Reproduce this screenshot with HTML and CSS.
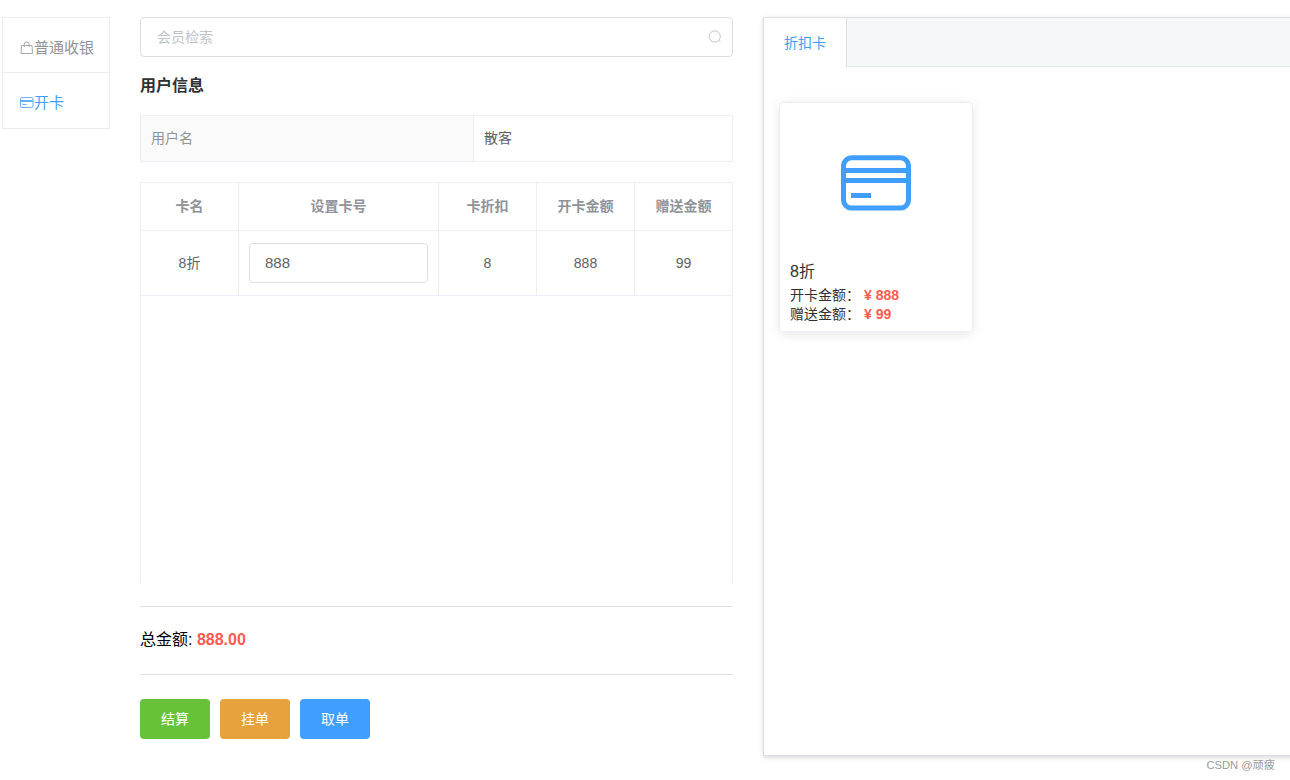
FILE: index.html
```html
<!DOCTYPE html>
<html lang="zh-CN">
<head>
<meta charset="UTF-8">
<title>收银</title>
<link rel="stylesheet" href="styles.css">
</head>
<body>
<div class="page">
  <nav class="side">
    <a class="side-item"><svg class="side-icon" viewBox="0 0 14 14" fill="none" stroke="currentColor"><path d="M1.5 4.5h10.5l.5 8H1z M4.2 6V3.4a2.5 2.5 0 0 1 5 0V6"/></svg><span>普通收银</span></a>
    <a class="side-item active"><svg class="side-icon" viewBox="0 0 14 14" fill="none" stroke="currentColor"><rect x=".5" y="1.5" width="12.5" height="10" rx="1.5"/><path d="M.5 4.5h12.5M.5 5.5h12.5M2.5 8.5h4"/></svg><span>开卡</span></a>
  </nav>

  <main class="main">
    <div class="search">
      <span>会员检索</span>
      <svg class="search-icon" viewBox="0 0 14 14" fill="none" stroke="currentColor"><circle cx="6.7" cy="6.5" r="5.6"/><path d="M10.6 10.4l2 2"/></svg>
    </div>
    <h2 class="title">用户信息</h2>
    <div class="info">
      <div class="info-label">用户名</div>
      <div class="info-value">散客</div>
    </div>
    <div class="table">
      <div class="row head">
        <div class="cell">卡名</div><div class="cell">设置卡号</div><div class="cell">卡折扣</div><div class="cell">开卡金额</div><div class="cell">赠送金额</div>
      </div>
      <div class="row body">
        <div class="cell">8折</div><div class="cell"><div class="input">888</div></div><div class="cell">8</div><div class="cell">888</div><div class="cell">99</div>
      </div>
    </div>
    <div class="total">总金额: <b class="price">888.00</b></div>
    <div class="actions">
      <button class="btn success">结算</button>
      <button class="btn warning">挂单</button>
      <button class="btn primary">取单</button>
    </div>
  </main>

  <section class="panel">
    <div class="tabs"><div class="tab">折扣卡</div></div>
    <div class="panel-body">
      <article class="card">
        <div class="card-pic">
          <svg class="card-icon" viewBox="0 0 70 56" fill="none" stroke="currentColor" stroke-width="5"><rect x="2.5" y="2.8" width="65" height="50.2" rx="8"/><path d="M2.5 15.5h65M2.5 25.5h65M10 40.5h20"/></svg>
        </div>
        <div class="card-name">8折</div>
        <div class="card-line">开卡金额：<b class="price">¥ 888</b></div>
        <div class="card-line">赠送金额：<b class="price">¥ 99</b></div>
      </article>
    </div>
  </section>
</div>
<div class="credit">CSDN @顽疲</div>
</body>
</html>
```
FILE: styles.css
```css
* { box-sizing: border-box; }
body {
  margin: 0;
  height: 780px;
  overflow: hidden;
  background: #fff;
  color: #303133;
  font: 14px/20px "Liberation Sans", "Noto Sans CJK SC", sans-serif;
}
.page {
  display: grid;
  grid-template-columns: 108px 593px 540px;
  column-gap: 30px;
  align-items: start;
  padding: 17px 0 0 2px;
}
.side { border: 1px solid #ebeef0; }
.side-item {
  display: flex;
  align-items: center;
  height: 54px;
  padding: 5px 0 0 17px;
  font-size: 15px;
  color: #909399;
}
.side-item + .side-item {
  height: 56px;
  padding-top: 4px;
  border-top: 1px solid #ebeef0;
}
.side-item.active { color: #409eff; }
.side-icon { width: 14px; height: 14px; opacity: .8; }

.search {
  display: flex;
  align-items: center;
  justify-content: space-between;
  height: 40px;
  padding: 0 10px 0 16px;
  border: 1px solid #dcdfe6;
  border-radius: 4px;
  color: #c0c4cc;
}
.search-icon { width: 14px; height: 14px; }
.title {
  margin: 17px 0;
  font-size: 16px;
  line-height: 24px;
  font-weight: 700;
}
.info {
  display: grid;
  grid-template-columns: 333px 1fr;
  height: 47px;
  border: 1px solid #ebeef5;
  line-height: 45px;
}
.info-label {
  padding-left: 10px;
  border-right: 1px solid #ebeef5;
  background: #fafafa;
  color: #909399;
}
.info-value { padding-left: 10px; color: #606266; }

.table {
  height: 401px;
  margin-top: 20px;
  border: 1px solid #ebeef5;
  border-bottom: 0;
}
.row {
  display: grid;
  grid-template-columns: 98px 200px 98px 98px 97px;
  border-bottom: 1px solid #ebeef5;
}
.head { height: 48px; color: #909399; font-weight: 700; }
.head .cell { padding-bottom: 2px; }
.body { height: 65px; color: #606266; }
.cell {
  display: flex;
  align-items: center;
  justify-content: center;
  border-right: 1px solid #ebeef5;
}
.cell:last-child { border-right: 0; }
.input {
  width: 179px;
  height: 40px;
  padding-left: 15px;
  border: 1px solid #dcdfe6;
  border-radius: 4px;
  font-size: 15px;
  line-height: 38px;
}
.total {
  height: 69px;
  margin-top: 23px;
  border: solid #dcdfe6;
  border-width: 1px 0;
  color: #000;
  font-size: 16px;
  line-height: 65px;
}
.price { color: #ff5a50; }
.actions { display: flex; gap: 10px; margin-top: 24px; }
.btn {
  width: 70px;
  height: 40px;
  padding: 0;
  border: 0;
  border-radius: 4px;
  color: #fff;
  font: inherit;
}
.success { background: #67c23a; }
.warning { background: #e6a23c; }
.primary { background: #409eff; }

.panel {
  height: 739px;
  border: 1px solid #dcdfe6;
  box-shadow: 0 2px 4px rgba(0, 0, 0, .12), 0 0 6px rgba(0, 0, 0, .04);
}
.tabs {
  height: 49px;
  border-bottom: 1px solid #e4e7ed;
  background: #f5f7fa;
}
.tab {
  width: 83px;
  height: 49px;
  padding-left: 20px;
  border-right: 1px solid #dcdfe6;
  background: #fff;
  color: #409eff;
  line-height: 50px;
}
.panel-body { padding: 35px 15px; }
.card {
  width: 194px;
  height: 230px;
  padding: 0 10px;
  border: 1px solid #ebeef5;
  border-radius: 4px;
  box-shadow: 0 2px 12px rgba(0, 0, 0, .1);
}
.card-pic {
  display: flex;
  justify-content: center;
  height: 156px;
  padding-top: 52px;
  color: #409eff;
}
.card-icon { width: 70px; height: 56px; }
.card-name { margin-bottom: 1px; font-size: 16px; line-height: 26px; }
.card-line { line-height: 19px; white-space: nowrap; }
.card-line .price { margin-left: 4px; }
.credit {
  position: absolute;
  right: 15px;
  bottom: 6px;
  color: #999;
  font-size: 11.2px;
  line-height: 18px;
}
```
